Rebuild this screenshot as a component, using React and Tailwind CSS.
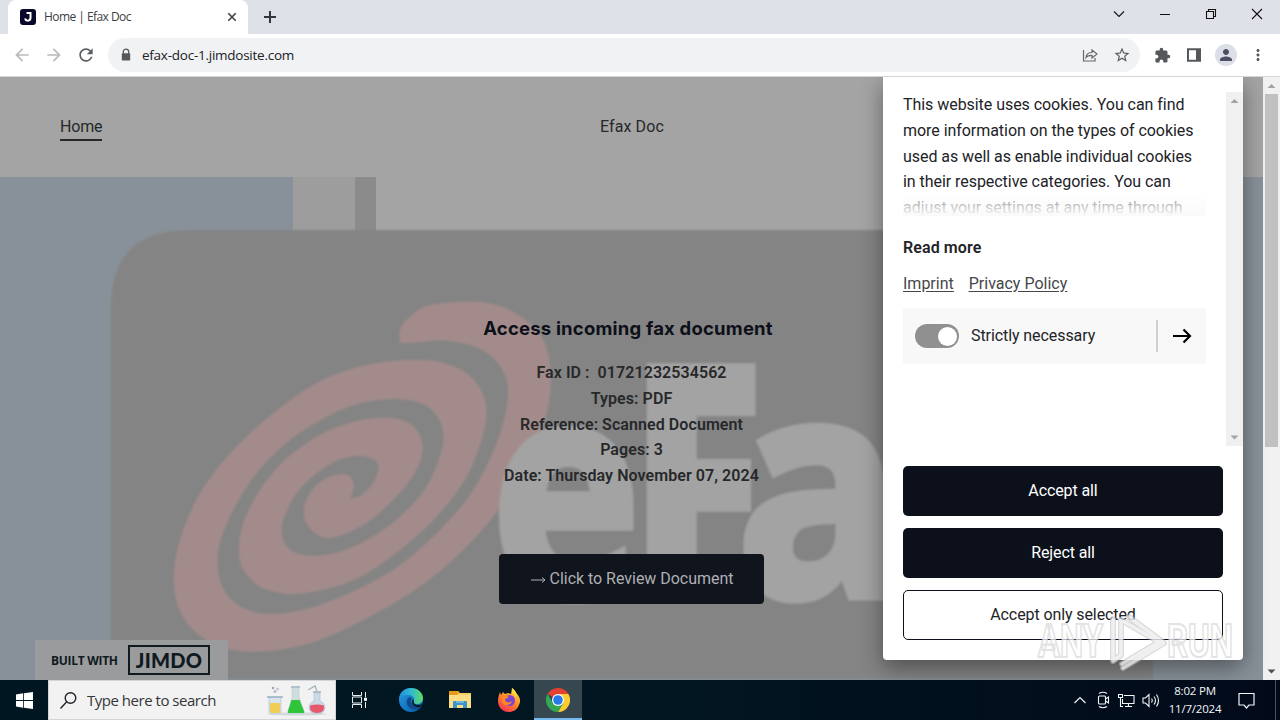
import React from "react";
import { MdStarBorder, MdExtension, MdPerson, MdMoreVert, MdRefresh, MdArrowBack, MdArrowForward } from "react-icons/md";

const OUTER = [[720,160],[720,120],[745,85],[800,48],[920,35],[1010,45],[1090,85],[1150,150],[1172,250],[1160,370],[1110,500],[1030,640],[900,790],[750,910],[570,1010],[430,1065],[290,1085],[180,1070],[100,1020],[55,950],[42,860],[60,750],[120,610],[220,480],[340,370],[460,285],[580,235],[700,213],[820,213],[900,238],[950,280],[978,345],[970,430],[920,560],[830,680],[720,780],[620,850],[520,892],[400,912],[310,895],[257,850],[237,790],[250,700],[300,600],[380,505],[480,435],[580,395],[680,383],[745,398],[782,440],[785,500],[750,570],[690,640],[610,705],[520,742],[470,733],[435,690],[435,640],[465,590],[510,560],[555,553],[578,570],[580,600],[570,625]];
const INNER = [[570,625],[600,618],[635,585],[655,540],[645,510],[600,498],[540,508],[470,550],[410,610],[370,690],[370,750],[400,785],[460,797],[540,785],[630,745],[720,680],[800,590],[845,480],[848,420],[825,370],[780,338],[700,327],[600,340],[500,380],[390,450],[290,550],[215,670],[175,780],[180,870],[215,930],[280,965],[370,970],[480,945],[600,895],[720,825],[840,720],[940,600],[1010,460],[1042,340],[1040,270],[1010,215],[950,172],[860,152],[790,155],[720,160]];

function smooth(points) {
  let d = "";
  for (let i = 0; i < points.length - 1; i++) {
    const a = points[Math.max(i - 1, 0)];
    const b = points[i];
    const c = points[i + 1];
    const e = points[Math.min(i + 2, points.length - 1)];
    d += `C${b[0] + (c[0] - a[0]) / 6} ${b[1] + (c[1] - a[1]) / 6} ${c[0] - (e[0] - b[0]) / 6} ${c[1] - (e[1] - b[1]) / 6} ${c[0]} ${c[1]}`;
  }
  return d;
}
const SPIRAL = `M720 160${smooth(OUTER)}${smooth(INNER)}Z`;

function TabStrip() {
  return (
    <div className="flex h-[34px] shrink-0 bg-[#dee1e8]">
      <div className="ml-2 flex w-60 items-center rounded-t-lg bg-white pr-2.5 pl-3">
        <svg className="h-4 w-4" viewBox="0 0 16 16">
          <rect width="16" height="16" rx="3" fill="#08092a" />
          <path d="M6.500 4h4v4.800a2.800 2.800 0 0 1-5.500.800" fill="none" stroke="#fff" strokeWidth="2" />
        </svg>
        <span className="ml-2 flex-1 font-['Open_Sans',sans-serif] text-[12px] tracking-[-0.550px] whitespace-nowrap text-[#3c4043]">Home | Efax Doc</span>
        <svg className="h-3 w-3" viewBox="0 0 12 12"><path d="M2.300 2.300l7.400 7.400M9.700 2.300L2.300 9.700" stroke="#3f4347" strokeWidth="1.600" /></svg>
      </div>
      <svg className="mt-[10px] ml-[15px] h-[14px] w-[14px]" viewBox="0 0 14 14"><path d="M7 1v12M1 7h12" stroke="#33373b" strokeWidth="2" /></svg>
      <div className="flex-1" />
      <div className="flex h-7 items-center text-[#111]">
        <svg className="mr-[32px] h-4 w-4" viewBox="0 0 16 16"><path d="M3 5.500l5 5 5-5" fill="none" stroke="currentColor" strokeWidth="1.100" /></svg>
        <svg className="mr-[34px] h-3 w-3" viewBox="0 0 12 12"><path d="M1 6.500h10" stroke="currentColor" /></svg>
        <svg className="mr-[34px] h-3 w-3" viewBox="0 0 12 12"><path d="M1.500 3.500h7v7h-7zM3.500 3.500v-2h7v7h-2" fill="none" stroke="currentColor" strokeWidth="1.100" /></svg>
        <svg className="mr-[17px] h-3 w-3" viewBox="0 0 12 12"><path d="M1 1l10 10M11 1L1 11" stroke="currentColor" strokeWidth="1.100" /></svg>
      </div>
    </div>
  );
}

function LockIcon() {
  return (
    <svg className="h-[14px] w-[14px]" viewBox="0 0 14 14">
      <path d="M4.300 6V3.800a2.700 2.700 0 0 1 5.400 0V6" fill="none" stroke="#55595e" strokeWidth="1.300" />
      <rect x="2.800" y="5.200" width="8.400" height="7.300" rx="1" fill="#55595e" />
    </svg>
  );
}

function Toolbar() {
  return (
    <div className="flex h-[43px] shrink-0 items-center border-b border-[#d4d6d8] bg-white">
      <MdArrowBack className="ml-3 h-5 w-5 text-[#b9bbbd]" />
      <MdArrowForward className="ml-3 h-5 w-5 text-[#b9bbbd]" />
      <MdRefresh className="ml-3 h-5 w-5 text-[#5a5e63]" />
      <div className="ml-3 flex h-[34px] w-[1032px] items-center rounded-full bg-[#f0f2f4] pr-[9px] pl-[11px]">
        <LockIcon />
        <span className="ml-[9px] flex-1 font-['Open_Sans',sans-serif] text-[13.500px] tracking-[-0.250px] text-[#202124]">efax-doc-1.jimdosite.com</span>
        <svg className="h-4 w-4 text-[#65696e]" viewBox="0 0 16 16" fill="none" stroke="currentColor" strokeWidth="1.200">
          <path d="M1.500 3v11h11.500v-3M4 10.500c.400-3.700 2.500-5 6-5V3l5 4-5 4V8.300c-3 0-4.700.500-6 2.200z" />
        </svg>
        <MdStarBorder className="ml-[15px] h-[18px] w-[18px] text-[#5a5e63]" />
      </div>
      <MdExtension className="ml-[13.500px] h-[17px] w-[17px] text-[#54585d]" />
      <svg className="ml-[16.500px] h-[14px] w-[14px]" viewBox="0 0 14 14"><path d="M1 1.200h12v11.600H1z" fill="none" stroke="#54585d" strokeWidth="2" /><path d="M9 1h4v12H9z" fill="#54585d" /></svg>
      <div className="ml-[14px] flex h-[22px] w-[22px] items-center justify-center rounded-full bg-[#dcdfe8]">
        <MdPerson className="h-[18px] w-[18px] text-[#4c5060]" />
      </div>
      <MdMoreVert className="ml-[12px] h-[18px] w-[18px] text-[#54585d]" />
    </div>
  );
}

function HeroArt() {
  return (
    <svg className="absolute inset-0 h-full w-full" viewBox="0 177 1263 503">
      <defs>
        <filter id="soft" x="-5%" y="-5%" width="110%" height="110%"><feGaussianBlur stdDeviation="1" /></filter>
      </defs>
      <rect x="0" y="177" width="1263" height="503" fill="#889199" />
      <rect x="293" y="177" width="62" height="80" fill="#9d9d9d" />
      <rect x="355" y="177" width="21" height="80" fill="#8b8b8b" />
      <rect x="376" y="177" width="777" height="80" fill="#a4a4a4" />
      <g filter="url(#soft)">
        <path d="M111 679V306Q111 230 190 230H1153V679Z" fill="#848484" />
        <g transform="translate(160 290) scale(.33333)"><path d={SPIRAL} fill="#a38b8b" /></g>
        <g fill="#a3a3a3" stroke="#a3a3a3" fontFamily="Open Sans, sans-serif">
          <text x="492" y="596" textLength="148" lengthAdjust="spacingAndGlyphs" fontSize="298" fontWeight="700" strokeWidth="10">e</text>
          <text x="628" y="599" textLength="137" lengthAdjust="spacingAndGlyphs" fontSize="329" fontWeight="800" strokeWidth="2">F</text>
          <text x="736" y="596" textLength="164" lengthAdjust="spacingAndGlyphs" fontSize="303" fontWeight="700" strokeWidth="9">a</text>
        </g>
      </g>
    </svg>
  );
}

function Website() {
  return (
    <div className="flex w-[1263px] flex-col font-[Roboto,sans-serif] text-[16px] text-[#27282a]">
      <header className="flex h-[100px] items-start bg-[#a4a4a4]">
        <div className="mt-[37px] ml-[60px] w-[42px] border-b-2 border-[#27282a] pt-px pb-px leading-[23px] tracking-[-0.150px]">Home</div>
        <div className="mt-[37px] ml-[498px] leading-[25px] tracking-[0.100px]">Efax Doc</div>
      </header>
      <main className="relative flex-1">
        <HeroArt />
        <div className="relative flex flex-col items-center">
          <h1 className="mt-[137px] mr-[7px] font-[Inter,sans-serif] text-[18.500px] leading-7 font-bold tracking-[0.200px] whitespace-nowrap text-[#0d1018]">Access incoming fax document</h1>
          <div className="mt-[18px] h-[129px] text-center leading-[25.800px] font-semibold tracking-[0.070px]">
            <p>Fax ID :&nbsp; 01721232534562</p>
            <p>Types: PDF</p>
            <p>Reference: Scanned Document</p>
            <p>Pages: 3</p>
            <p>Date: Thursday November 07, 2024</p>
          </div>
          <button className="mt-[65px] flex h-[50px] w-[265px] items-center justify-center rounded bg-[#10141d] pl-px tracking-[-0.030px] text-[#aeb0b3]">
            <svg className="mr-1 h-3 w-[15px]" viewBox="0 0 15 12"><path d="M0 7h14M11 4.500L14 7l-3 2.500" fill="none" stroke="currentColor" /></svg>
            Click to Review Document
          </button>
        </div>
        <div className="absolute bottom-0 left-[35px] flex h-10 w-[193px] items-center bg-[#999b9c] pl-4 text-[#10191e]">
          <span className="w-[67px] pt-[2px] font-['Open_Sans',sans-serif] text-[12px] font-bold tracking-[-0.300px] whitespace-nowrap">BUILT WITH</span>
          <div className="ml-[10px] flex h-[30px] w-[82px] items-center justify-center border-2 border-current font-[Lato,sans-serif] text-[20px] leading-none font-black tracking-[0.250px]">JIMDO</div>
        </div>
      </main>
    </div>
  );
}

function Triangle({ down, dark }) {
  return (
    <svg className="h-[17px] w-[17px]" viewBox="0 0 17 17">
      <path d={down ? "M4.500 6.500h8l-4 4z" : "M4.500 11h8L8.500 7z"} fill={dark ? "#505050" : "#a3a3a3"} />
    </svg>
  );
}

function CookieDialog() {
  return (
    <div className="absolute top-0 left-[883px] flex h-[583px] w-[360px] flex-col rounded-b bg-white font-[Roboto,sans-serif] text-[16px] text-[#222327] shadow-[0_8px_22px_rgba(0,0,0,0.4)]">
      <div className="mt-[15px] ml-5 flex h-[354px]">
        <div className="w-[303px]">
          <div className="relative h-[124px] overflow-hidden leading-[25.800px] tracking-[-0.050px] whitespace-nowrap">
            This website uses cookies. You can find<br />more information on the types of cookies<br />used as well as enable individual cookies<br />in their respective categories. You can<br />adjust your settings at any time through
            <div className="absolute bottom-0 left-0 h-6 w-full bg-linear-to-b from-white/40 to-[#fafafa]" />
          </div>
          <div className="mt-[19px] leading-[26px] font-semibold tracking-[0.100px]">Read more</div>
          <div className="mt-[10px] flex gap-[15px] leading-[26px] text-[#45474a] underline underline-offset-2">
            <a>Imprint</a><a>Privacy Policy</a>
          </div>
          <div className="mt-[11px] flex h-14 items-center bg-[#f8f8f8] pl-3">
            <div className="flex h-6 w-11 items-center justify-end rounded-full bg-[#909090] pr-[2px]">
              <div className="h-[19px] w-[19px] rounded-full bg-white" />
            </div>
            <span className="ml-3 flex-1 tracking-[-0.080px]">Strictly necessary</span>
            <div className="h-8 w-[2px] bg-[#d0d0d0]" />
            <svg className="mr-[14px] ml-[14px] h-5 w-5" viewBox="0 0 20 20"><path d="M1 10h17M11.500 3.500L18 10l-6.500 6.500" fill="none" stroke="#000" strokeWidth="2.200" /></svg>
          </div>
        </div>
        <div className="ml-5 flex w-[17px] flex-col justify-between bg-[#f0f0f0]">
          <Triangle /><Triangle down />
        </div>
      </div>
      <div className="mx-5 mt-5 flex flex-col gap-3 tracking-[-0.100px]">
        <button className="h-[50px] rounded-[5px] bg-[#0c101b] text-white">Accept all</button>
        <button className="h-[50px] rounded-[5px] bg-[#0c101b] text-white">Reject all</button>
        <button className="h-[50px] rounded-[5px] border border-[#0c101b] bg-white">Accept only selected</button>
      </div>
    </div>
  );
}

function Flasks() {
  return (
    <svg className="h-[34px] w-[64px]" viewBox="0 0 64 34">
      <ellipse cx="33" cy="31" rx="30" ry="1.500" fill="#d7dadd" />
      <path d="M5 14h12v15q0 2-2 2H7q-2 0-2-2z" fill="#d5e4ef" stroke="#b4c5d2" strokeWidth=".7" />
      <path d="M6 20h10v9q0 1-1 1H7q-1 0-1-1z" fill="#f2cd55" />
      <path d="M3 14h16" stroke="#9db2c0" strokeWidth="1.500" />
      <circle cx="11" cy="8.500" r="1.500" fill="#b5bdca" /><circle cx="9" cy="5" r="1.300" fill="#9da3b5" /><circle cx="13.500" cy="6" r="1.500" fill="#c1c8d2" />
      <path d="M28 4h7v10l5 14q1 3-2 3H26q-3 0-2-3l4-13z" fill="#cddedf" stroke="#b7c9cc" strokeWidth=".6" />
      <path d="M27.500 17h8l4.500 11q1 2-2 2H26q-3 0-2-2z" fill="#2fc53a" />
      <path d="M27 4h9" stroke="#a6bac5" strokeWidth="1.500" />
      <path d="M50 9h6v9q5 2 5 7-1 6-8 6t-8-6q0-5 5-7z" fill="#cad9e6" stroke="#b1c3d0" strokeWidth=".7" />
      <path d="M46 22.500q7-2 14 0 1 7.500-7 7.500t-7-7.500z" fill="#e6596c" />
      <path d="M49 9h8M44 7l7-4 2 5" fill="none" stroke="#a2b4c0" strokeWidth="1.300" />
    </svg>
  );
}

function EdgeIcon() {
  return (
    <svg className="h-6 w-6" viewBox="0 0 24 24">
      <defs>
        <linearGradient id="edgeTop"><stop stopColor="#2189d8" /><stop offset=".5" stopColor="#2fb9d5" /><stop offset="1" stopColor="#62dc63" /></linearGradient>
        <linearGradient id="edgeBody" x1="0" y1="0" x2="1" y2="1"><stop stopColor="#249be6" /><stop offset="1" stopColor="#0a58a5" /></linearGradient>
      </defs>
      <circle cx="12" cy="12" r="12" fill="url(#edgeBody)" />
      <path d="M0 12C0 4 6 0 12 0c7 0 12 5 12 10 0 4-3 6-6 6-3 0-4-1-3-3C16 8 12 7 9 7 5 7 1 9 0 12z" fill="url(#edgeTop)" />
      <path d="M9 10c-3 4-1 9 4 11 4 1 7 0 9-2-3 1-7 0-9-3-2-2-1-4 0-5-1-2-3-2-4-1z" fill="#114a8b" />
      <path d="M15 13c-1 2 1 4 4 4 2 0 3-.500 4.500-1.500C23 17 22 18 21 19c-4 1-8-2-8-5 0-1 .300-2 1-2.500z" fill="#051923" />
    </svg>
  );
}

function FolderIcon() {
  return (
    <svg className="h-6 w-6" viewBox="0 0 24 24">
      <path d="M1 3h9l2 2h11v15H1z" fill="#f5ce65" /><path d="M1 3h8l2 2-2 2H1z" fill="#e59b18" />
      <path d="M1 7h22v13H1z" fill="#fbdd83" />
      <path d="M5 20v-6q0-1 1-1h12q1 0 1 1v6h-4v-3H9v3z" fill="#3d91cd" /><path d="M8 13h8v2H8z" fill="#70b7df" />
    </svg>
  );
}

function FirefoxIcon() {
  return (
    <svg className="h-6 w-6" viewBox="0 0 24 24">
      <defs><linearGradient id="fire" x1=".8" y1="0" x2=".2" y2="1"><stop stopColor="#ffe141" /><stop offset=".5" stopColor="#ff8628" /><stop offset="1" stopColor="#f62c5c" /></linearGradient></defs>
      <path d="M3 4l1 3 2-3 2 2 3-1 3 1 1-6c4 3 4 5 6 7 2 3 3 6 1 10-2 5-6 7-10 7C5 24 1 19 1 13c0-4 1-6 2-9z" fill="url(#fire)" />
      <circle cx="12.500" cy="12.500" r="5.500" fill="#7e43cf" />
      <path d="M5 8c3-1 5 0 7 1-2 2-4 1-4 3 1 3 5 3 7 1-1 5-9 6-10 0z" fill="#ff8b20" />
      <path d="M15 0c4 3 5 6 4 11 0-3-2-5-4-6z" fill="#ffdc3b" />
    </svg>
  );
}

function ChromeIcon() {
  return (
    <svg className="h-6 w-6" viewBox="0 0 24 24">
      <path d="M12 12L1.600 6A12 12 0 0 1 22.400 6z" fill="#e34133" />
      <path d="M12 6h10.400A12 12 0 0 1 12 24l5.200-9z" fill="#fccb32" />
      <path d="M1.600 6A12 12 0 0 0 12 24l5.200-9H6.800z" fill="#33a852" />
      <circle cx="12" cy="12" r="6" fill="#fff" /><circle cx="12" cy="12" r="4.800" fill="#277be8" />
    </svg>
  );
}

function Taskbar() {
  return (
    <div className="flex h-10 shrink-0 bg-linear-to-r from-[#001722] via-[#011620] to-[#020a1a]">
      <div className="flex w-12 items-center justify-center">
        <svg className="h-[17px] w-[17px]" viewBox="0 0 17 17" fill="#fff"><path d="M0 2.400L7.200 1.300V8H0zM8 1.200L17 0v8H8zM0 9h7.200v6.700L0 14.600zM8 9h9v8l-9-1.200z" /></svg>
      </div>
      <div className="flex w-72 items-center border border-[#d3d5d7] bg-[#f2f2f2] pr-[7px] pl-[10px]">
        <svg className="h-[19px] w-[19px]" viewBox="0 0 19 19" fill="none" stroke="#20242a" strokeWidth="1.400"><circle cx="11.500" cy="7" r="5.300" /><path d="M7.500 11L1.500 17.500" /></svg>
        <span className="ml-[9px] flex-1 font-['Open_Sans',sans-serif] text-[15px] tracking-[-0.480px] whitespace-nowrap text-[#34373a]">Type here to search</span>
        <Flasks />
      </div>
      <div className="flex w-[47px] items-center justify-center">
        <svg className="h-4 w-[17px]" viewBox="0 0 17 16" fill="none" stroke="#e8edf0"><path d="M1.500 0v3.500h9V0M1.500 16v-3.500h9V16M1.500 5h9v6h-9zM14.500 0v5M14.500 10v6" /><path d="M13.500 6h2v2.500h-2z" fill="#fff" /></svg>
      </div>
      <div className="flex w-[55px] items-center justify-center"><EdgeIcon /></div>
      <div className="flex w-11 items-center justify-center"><FolderIcon /></div>
      <div className="flex w-[52px] items-center justify-center pl-[2px]"><FirefoxIcon /></div>
      <div className="flex w-12 items-center justify-center border-b-2 border-[#76b9ed] bg-[#364750] pt-[2px]"><ChromeIcon /></div>
      <div className="flex-1" />
      <div className="flex items-center text-[#f2f5f8]">
        <svg className="mr-[11px] h-3 w-3" viewBox="0 0 12 12"><path d="M.500 9L6 3.500 11.500 9" fill="none" stroke="currentColor" strokeWidth="1.200" /></svg>
        <svg className="mr-[7px] h-[18px] w-[14px]" viewBox="0 0 14 18" fill="none" stroke="currentColor" strokeWidth="1.100"><rect x="1.500" y="5" width="7" height="8" rx="1" /><path d="M8.500 8l3-2v6l-3-2M2 2.500q4-2.500 8 0M2 15.500q4 2.500 8 0" /></svg>
        <svg className="mr-[7px] h-[15px] w-[17px]" viewBox="0 0 17 15" fill="none" stroke="currentColor" strokeWidth="1.100"><path d="M6 2.500h10v8H4.500V6M10.500 10.500v3M7 13.500h7M.500 1.500h4v3h-4zM2.500 4.500v9H5" /></svg>
        <svg className="mr-[9px] h-[15px] w-[18px]" viewBox="0 0 18 15" fill="none" stroke="currentColor" strokeWidth="1.100"><path d="M1 5h2.500L7 1.500v12L3.500 10H1zM9.500 5.500q1.500 2 0 4M12 3.500q3 4 0 8M14.500 1.500q4 6 0 12" /></svg>
        <div className="flex w-[52px] flex-col items-center font-['Open_Sans',sans-serif] text-[11.500px] leading-[18px] tracking-[-0.200px] whitespace-nowrap">
          <span>8:02 PM</span><span>11/7/2024</span>
        </div>
        <svg className="mr-5 ml-[17px] h-[17px] w-[17px]" viewBox="0 0 17 17" fill="none" stroke="currentColor" strokeWidth="1.200"><path d="M1 1.500h15v11.500h-5l-2.500 3L6 13H1z" /></svg>
        <div className="mr-1 h-10 w-px bg-[#4b5362]" />
      </div>
    </div>
  );
}

function Watermark() {
  return (
    <svg className="absolute top-[605px] left-[1030px] h-[72px] w-[210px]" viewBox="1030 605 210 72">
      <g fill="#fff" fillOpacity=".7" stroke="#d0d1d3" strokeOpacity=".6" strokeWidth="2.200" fontFamily="Roboto, sans-serif" fontWeight="700" fontSize="47">
        <text x="1038" y="657" textLength="65" lengthAdjust="spacingAndGlyphs">ANY</text>
        <text x="1167" y="657" textLength="66" lengthAdjust="spacingAndGlyphs">RUN</text>
      </g>
      <g fill="none" strokeLinejoin="round" strokeLinecap="round">
        <path d="M1113 619v42l8-6V620l38 22-37 22M1123 668l41-25-35-26" stroke="#b9bcbf" strokeOpacity=".55" strokeWidth="6" />
        <path d="M1113 619v42l8-6V620l38 22-37 22M1123 668l41-25-35-26" stroke="#fff" strokeOpacity=".6" strokeWidth="3.500" />
      </g>
    </svg>
  );
}

export default function App() {
  return (
    <div className="relative flex h-[720px] w-[1280px] flex-col overflow-hidden">
      <TabStrip />
      <Toolbar />
      <div className="relative flex h-[603px] shrink-0 overflow-hidden">
        <Website />
        <div className="flex w-[17px] flex-col items-center bg-[#f1f1f1]">
          <Triangle />
          <div className="h-[353px] w-[13px] bg-[#c1c1c1]" />
          <div className="flex-1" />
          <Triangle down dark />
        </div>
        <CookieDialog />
      </div>
      <Taskbar />
      <Watermark />
    </div>
  );
}
